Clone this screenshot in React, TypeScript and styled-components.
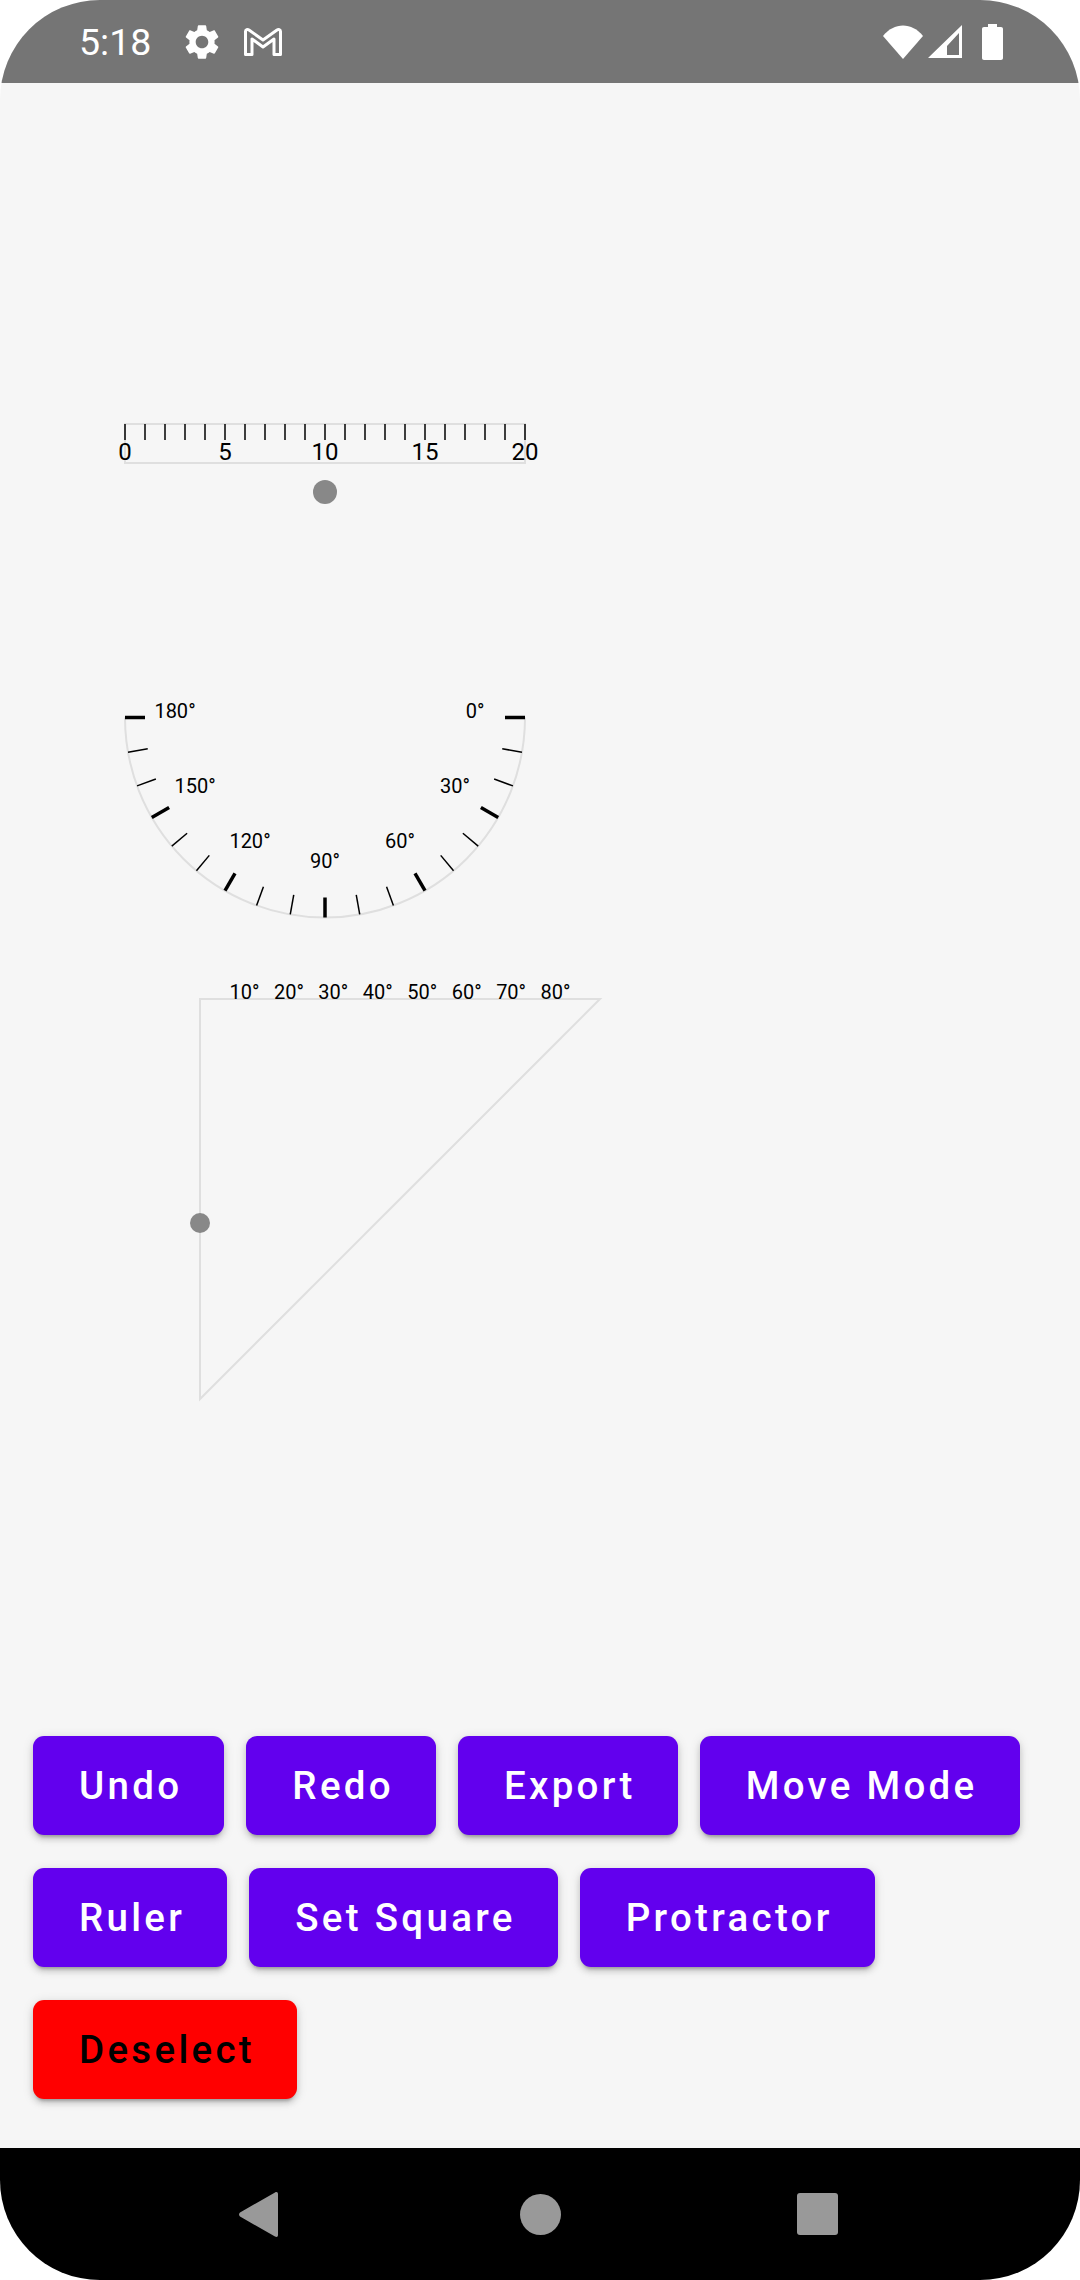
import React from 'react'
import styled, { createGlobalStyle } from 'styled-components'

const GlobalStyle = createGlobalStyle`
  html, body {
    margin: 0;
    padding: 0;
    background: #fff;
  }
`

const rulerTicks = Array.from({ length: 21 }, (_, i) => i)
const rulerLabels = [0, 5, 10, 15, 20]
const protractorTicks = Array.from({ length: 19 }, (_, i) => i * 10)
const protractorLabels = [0, 30, 60, 90, 120, 150, 180]
const squareLabels = [10, 20, 30, 40, 50, 60, 70, 80]

const PROTRACTOR = { x: 325, y: 717.5, r: 200 }

const polar = (deg: number, r: number) => {
  const rad = (deg * Math.PI) / 180
  return {
    x: PROTRACTOR.x + r * Math.cos(rad),
    y: PROTRACTOR.y + r * Math.sin(rad),
  }
}

const Ruler = () => (
  <g>
    <Outline as="rect" x={125} y={424} width={400} height={39} />
    {rulerTicks.map((i) => (
      <Tick key={i} x1={125 + i * 20} y1={424} x2={125 + i * 20} y2={440} />
    ))}
    {rulerLabels.map((n) => (
      <RulerLabel key={n} x={125 + n * 20} y={460}>
        {n}
      </RulerLabel>
    ))}
    <Handle cx={325} cy={492} r={12} />
  </g>
)

const Protractor = () => {
  const { x, y, r } = PROTRACTOR
  return (
    <g>
      <Outline as="path" d={`M${x - r} ${y} A${r} ${r} 0 0 0 ${x + r} ${y}`} />
      {protractorTicks.map((deg) => {
        const a = polar(deg, r)
        const b = polar(deg, r - 20)
        const Mark = deg % 30 === 0 ? MajorTick : Tick
        return <Mark key={deg} x1={a.x} y1={a.y} x2={b.x} y2={b.y} />
      })}
      {protractorLabels.map((deg) => {
        const p = polar(deg, 150)
        return (
          <AngleLabel key={deg} x={p.x} y={p.y + 0.5}>
            {deg}°
          </AngleLabel>
        )
      })}
    </g>
  )
}

const SetSquare = () => (
  <g>
    <Outline as="path" d="M200 999 H600 L200 1399 Z" />
    {squareLabels.map((deg, i) => (
      <AngleLabel key={deg} x={200 + ((i + 1) * 400) / 9} y={999}>
        {deg}°
      </AngleLabel>
    ))}
    <Handle cx={200} cy={1223} r={10} />
  </g>
)

export default function App() {
  return (
    <>
      <GlobalStyle />
      <Screen>
        <StatusBar>
          <StatusLeft>
            <Time>5:18</Time>
            <StatusIcon width={42} height={42} viewBox="0 0 24 24">
              <path d="M19.14 12.94c.04-.3.06-.61.06-.94 0-.32-.02-.64-.07-.94l2.03-1.58c.18-.14.23-.41.12-.61l-1.92-3.32c-.12-.22-.37-.29-.59-.22l-2.39.96c-.5-.38-1.03-.7-1.62-.94l-.36-2.54c-.04-.24-.24-.41-.48-.41h-3.84c-.24 0-.43.17-.47.41l-.36 2.54c-.59.24-1.13.57-1.62.94l-2.39-.96c-.22-.08-.47 0-.59.22L2.74 8.87c-.12.21-.08.47.12.61l2.03 1.58c-.05.3-.09.63-.09.94s.02.64.07.94l-2.03 1.58c-.18.14-.23.41-.12.61l1.92 3.32c.12.22.37.29.59.22l2.39-.96c.5.38 1.03.7 1.62.94l.36 2.54c.05.24.24.41.48.41h3.84c.24 0 .44-.17.47-.41l.36-2.54c.59-.24 1.13-.56 1.62-.94l2.39.96c.22.08.47 0 .59-.22l1.92-3.32c.12-.22.07-.47-.12-.61l-2.01-1.58zM12 15.6c-1.98 0-3.6-1.62-3.6-3.6s1.62-3.6 3.6-3.6 3.6 1.62 3.6 3.6-1.62 3.6-3.6 3.6z" />
            </StatusIcon>
            <svg width={40} height={30} viewBox="0 0 40 30">
              <path
                d="M2.5 27.5 V4.5 C2.5 2.5 4.5 1.8 6 3 L20 13 L34 3 C35.5 1.8 37.5 2.5 37.5 4.5 V27.5 H31 V12 L20 20 L9 12 V27.5 Z"
                fill="none"
                stroke="#fff"
                strokeWidth={3}
                strokeLinejoin="round"
              />
            </svg>
          </StatusLeft>
          <StatusRight>
            <StatusIcon width={40} height={34} viewBox="0 0 40 34">
              <path d="M0 11 C11 -3 29 -3 40 11 L20 34 Z" />
            </StatusIcon>
            <StatusIcon width={34} height={34} viewBox="0 0 34 34">
              <path
                fillRule="evenodd"
                d="M34 0 V33 H0 Z M31 8 L19 21 V30 H31 Z"
              />
            </StatusIcon>
            <BatteryIcon width={21} height={36} viewBox="0 0 21 36">
              <path d="M6 0 H15 V3 H19 C20.2 3 21 3.8 21 5 V34 C21 35.2 20.2 36 19 36 H2 C.8 36 0 35.2 0 34 V5 C0 3.8 .8 3 2 3 H6 Z" />
            </BatteryIcon>
          </StatusRight>
        </StatusBar>

        <Canvas>
          <svg width={1080} height={1653} viewBox="0 83 1080 1653">
            <Ruler />
            <Protractor />
            <SetSquare />
          </svg>
        </Canvas>

        <Toolbar>
          <ActionButton>Undo</ActionButton>
          <ActionButton>Redo</ActionButton>
          <ActionButton>Export</ActionButton>
          <ActionButton>Move Mode</ActionButton>
          <ActionButton>Ruler</ActionButton>
          <ActionButton>Set Square</ActionButton>
          <ActionButton>Protractor</ActionButton>
          <ActionButton $danger>Deselect</ActionButton>
        </Toolbar>

        <NavBar>
          <NavIcon width={39} height={45} viewBox="0 0 39 45">
            <path d="M36 .5 C37.8 -.6 39 .3 39 2 V43 C39 44.7 37.8 45.6 36 44.5 L1 24.5 C-.3 23.6 -.3 21.4 1 20.5 Z" />
          </NavIcon>
          <HomeIcon width={41} height={41} viewBox="0 0 41 41">
            <circle cx={20.5} cy={20.5} r={20.5} />
          </HomeIcon>
          <NavIcon width={41} height={42} viewBox="0 0 41 42">
            <rect width={41} height={42} rx={3} />
          </NavIcon>
        </NavBar>
      </Screen>
    </>
  )
}

const Screen = styled.div`
  width: 1080px;
  height: 2280px;
  display: flex;
  flex-direction: column;
  overflow: hidden;
  border-radius: 100px;
  background: #f6f6f6;
`
const StatusBar = styled.div`
  height: 83px;
  flex: none;
  display: flex;
  align-items: center;
  justify-content: space-between;
  padding: 0 77px 0 79px;
  box-sizing: border-box;
  background: #757575;
`
const StatusLeft = styled.div`
  display: flex;
  align-items: center;
  gap: 20px;
`
const StatusRight = styled.div`
  display: flex;
  align-items: center;
  gap: 5px;
`
const Time = styled.span`
  font-family: Roboto, sans-serif;
  font-size: 37.5px;
  color: #fff;
  margin-right: 10px;
`
const StatusIcon = styled.svg`
  display: block;
  fill: #fff;
`
const BatteryIcon = styled(StatusIcon)`
  margin-left: 15px;
`
const Canvas = styled.div`
  flex: 1;
  min-height: 0;
`
const Outline = styled.path`
  fill: none;
  stroke: #dfdfdf;
  stroke-width: 2;
`
const Tick = styled.line`
  stroke: #000;
  stroke-width: 1.5;
`
const MajorTick = styled.line`
  stroke: #000;
  stroke-width: 3.5;
`
const Handle = styled.circle`
  fill: #888;
`
const RulerLabel = styled.text`
  font-family: Roboto, sans-serif;
  font-size: 24px;
  text-anchor: middle;
  fill: #000;
`
const AngleLabel = styled.text`
  font-family: Roboto, sans-serif;
  font-size: 20px;
  text-anchor: middle;
  fill: #000;
`
const Toolbar = styled.div`
  flex: none;
  display: flex;
  flex-wrap: wrap;
  gap: 33px 22px;
  padding: 0 33px 49px;
`
const ActionButton = styled.button<{ $danger?: boolean }>`
  height: 99px;
  padding: 0 42px 0 46px;
  border: none;
  border-radius: 11px;
  font-family: Roboto, sans-serif;
  font-size: 38.5px;
  font-weight: 500;
  letter-spacing: 3.3px;
  background: ${(p) => (p.$danger ? '#ff0000' : '#6200ee')};
  color: ${(p) => (p.$danger ? '#000' : '#fff')};
  box-shadow:
    0 5px 3px -3px rgba(0, 0, 0, 0.2),
    0 4px 6px rgba(0, 0, 0, 0.14),
    0 2px 12px rgba(0, 0, 0, 0.12);
`
const NavBar = styled.div`
  height: 132px;
  flex: none;
  display: flex;
  align-items: center;
  justify-content: space-between;
  padding: 0 242px 0 239px;
  box-sizing: border-box;
  background: #000;
`
const NavIcon = styled.svg`
  display: block;
  fill: #999;
`
const HomeIcon = styled(NavIcon)`
  margin-left: 6px;
`
